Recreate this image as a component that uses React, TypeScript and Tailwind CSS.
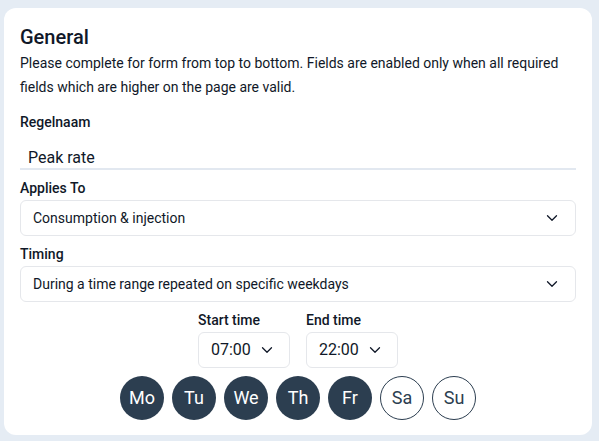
import { ChevronDown } from 'lucide-react'

const days = [
  { label: 'Mo', on: true },
  { label: 'Tu', on: true },
  { label: 'We', on: true },
  { label: 'Th', on: true },
  { label: 'Fr', on: true },
  { label: 'Sa', on: false },
  { label: 'Su', on: false },
]

function Select({ value }: { value: string }) {
  return (
    <div className="flex h-9 items-center justify-between rounded-md border border-gray-200 bg-white pl-3 pr-[14px] text-sm text-gray-900">
      <span>{value}</span>
      <ChevronDown size={18} strokeWidth={1.7} className="text-gray-900" />
    </div>
  )
}

function TimeSelect({ label, value }: { label: string; value: string }) {
  return (
    <div className="flex flex-col gap-0.5">
      <span className="text-sm font-medium leading-5 text-gray-900">{label}</span>
      <div className="flex h-9 w-[92px] items-center justify-between rounded-md border border-gray-200 bg-white pl-3 pr-[13px] text-base text-gray-900">
        <span>{value}</span>
        <ChevronDown size={18} strokeWidth={1.7} />
      </div>
    </div>
  )
}

export default function App() {
  return (
    <div className="min-h-screen bg-[#e5ecf4] pt-2 pl-1 pr-[7px] font-['Roboto',sans-serif]">
      <div className="rounded-xl bg-white px-4 pt-[15px] pb-[15px]">
        <h2 className="text-xl font-medium leading-7 text-gray-900">General</h2>
        <p className="text-sm leading-6 text-gray-900">
          Please complete for form from top to bottom. Fields are enabled only when all required fields which are higher on the page are valid.
        </p>

        <label className="mt-[13px] block text-sm font-medium leading-5 text-gray-900">Regelnaam</label>
        <div className="border-b-2 border-[#e2e8f0] px-2 pt-4 text-base leading-5 text-gray-900">Peak rate</div>

        <label className="mt-2 mb-0.5 block text-sm font-medium leading-5 text-gray-900">Applies To</label>
        <Select value="Consumption & injection" />

        <label className="mt-2 mb-0.5 block text-sm font-medium leading-5 text-gray-900">Timing</label>
        <Select value="During a time range repeated on specific weekdays" />

        <div className="mt-2 flex justify-center gap-4">
          <TimeSelect label="Start time" value="07:00" />
          <TimeSelect label="End time" value="22:00" />
        </div>

        <div className="mt-2 flex justify-center gap-2">
          {days.map((d) =>
            d.on ? (
              <div
                key={d.label}
                className="flex h-11 w-11 items-center justify-center rounded-full bg-[#2c3e50] text-lg text-white"
              >
                {d.label}
              </div>
            ) : (
              <div
                key={d.label}
                className="flex h-11 w-11 items-center justify-center rounded-full border border-[#2c3e50] bg-white text-lg text-[#2c3e50]"
              >
                {d.label}
              </div>
            )
          )}
        </div>
      </div>
    </div>
  )
}
